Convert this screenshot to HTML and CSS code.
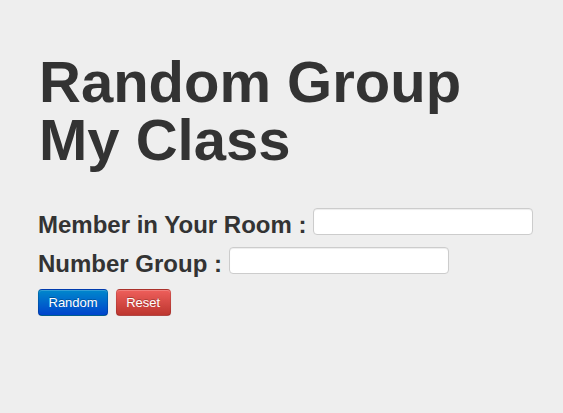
FILE: index.html
```html
<!DOCTYPE html>
<html>
<head>
<meta charset="utf-8">
<title>Random Group My Class</title>
<link rel="stylesheet" href="styles.css">
</head>
<body>
<div class="container">
  <h1 class="title">Random Group<br>My Class</h1>
  <form class="form">
    <div class="row">
      <label class="label" for="member">Member in Your Room :</label>
      <input class="input" id="member" type="text">
    </div>
    <div class="row">
      <label class="label" for="group">Number Group :</label>
      <input class="input" id="group" type="text">
    </div>
    <div class="actions">
      <button type="button" class="btn btn-primary">Random</button>
      <button type="reset" class="btn btn-danger">Reset</button>
    </div>
  </form>
</div>
</body>
</html>
```

FILE: styles.css
```css
html, body {
  margin: 0;
  padding: 0;
  background: #eeeeee;
  font-family: "Liberation Sans", Arial, sans-serif;
  color: #333333;
}

.container {
  padding: 53px 37px 0 38px;
}

.title {
  margin: 0 0 39px 1px;
  font-size: 58px;
  line-height: 58px;
  font-weight: bold;
  color: #333333;
}

.form {
  margin: 0;
}

.row {
  display: flex;
  align-items: flex-start;
  gap: 7px;
  margin-bottom: 7.5px;
}

.label {
  flex-shrink: 0;
  white-space: nowrap;
  font-size: 24px;
  line-height: 28px;
  padding-top: 3px;
  font-weight: bold;
  color: #333333;
}

.input {
  flex-shrink: 0;
  box-sizing: border-box;
  width: 220px;
  height: 27px;
  margin: 0;
  padding: 4px 6px;
  background: #ffffff;
  border: 1px solid #cccccc;
  border-radius: 4px;
  box-shadow: inset 0 1px 1px rgba(0, 0, 0, 0.075);
  font-family: "Liberation Sans", Arial, sans-serif;
  font-size: 14px;
  color: #555555;
}

.actions {
  display: flex;
  gap: 7.5px;
  margin-top: 11.5px;
}

.btn {
  box-sizing: border-box;
  height: 27px;
  padding: 0 9.5px;
  border-radius: 4px;
  font-family: "Liberation Sans", Arial, sans-serif;
  font-size: 13px;
  line-height: 25px;
  color: #ffffff;
  text-shadow: 0 -1px 0 rgba(0, 0, 0, 0.25);
  cursor: pointer;
  box-shadow: inset 0 1px 0 rgba(255, 255, 255, 0.2), 0 1px 2px rgba(0, 0, 0, 0.05);
}

.btn-primary {
  background: linear-gradient(to bottom, #0088cc, #0044cc);
  border: 1px solid rgba(0, 0, 0, 0.15);
  border-bottom-color: rgba(0, 0, 0, 0.3);
}

.btn-danger {
  background: linear-gradient(to bottom, #ee5f5b, #bd362f);
  border: 1px solid rgba(0, 0, 0, 0.1);
  border-bottom-color: rgba(0, 0, 0, 0.25);
}
```
